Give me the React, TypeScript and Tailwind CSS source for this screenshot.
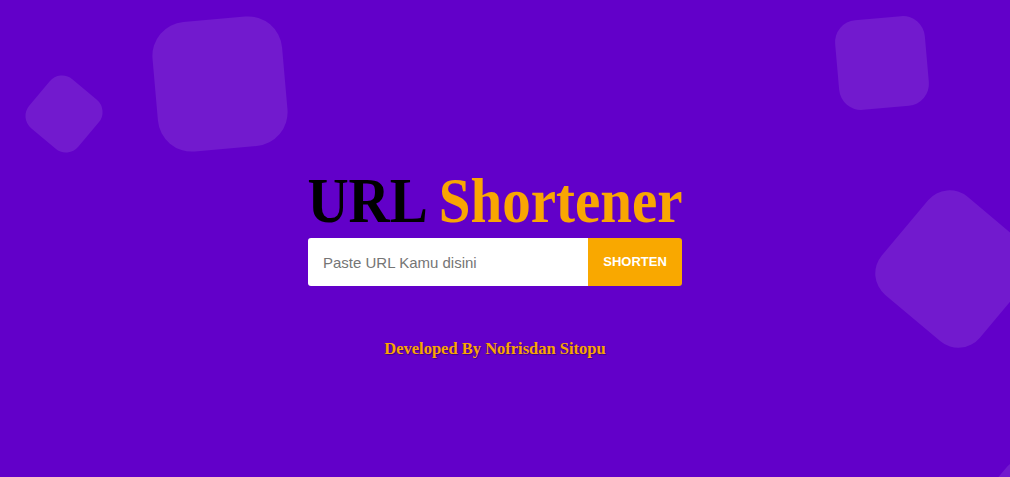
import React from 'react';

// decorative rounded squares floating in the background
const Shapes = () => (
  <div className="pointer-events-none absolute inset-0 overflow-hidden">
    <div className="absolute left-[32px] top-[82px] h-[64px] w-[64px] rotate-[40deg] rounded-[16px] bg-white/10" />
    <div className="absolute left-[155px] top-[19px] h-[130px] w-[130px] -rotate-[5deg] rounded-[34px] bg-white/10" />
    <div className="absolute left-[837px] top-[18px] h-[90px] w-[90px] -rotate-[5deg] rounded-[22px] bg-white/10" />
    <div className="absolute left-[890px] top-[205px] h-[128px] w-[128px] rotate-[40deg] rounded-[28px] bg-white/10" />
    <div className="absolute left-[990px] top-[468px] h-[60px] w-[60px] rotate-[40deg] rounded-[14px] bg-white/10" />
  </div>
);

export default function App() {
  return (
    <div className="relative h-[477px] w-full overflow-hidden bg-[#6200c9]">
      <Shapes />
      <div className="relative flex flex-col items-center pt-[170px] pr-[20px]">
        <h1 className="origin-bottom scale-y-[1.1] text-[57px] leading-[70px] font-bold font-['Liberation_Serif',serif] text-black">
          URL <span className="text-[#f9a602]">Shortener</span>
        </h1>
        <form className="-mt-[2px] flex h-[48px] w-[374px]" onSubmit={e => e.preventDefault()}>
          <input
            type="text"
            placeholder="Paste URL Kamu disini"
            className="h-full flex-1 rounded-l-[3px] bg-white px-[15px] text-[15px] text-gray-800 outline-none placeholder:text-[#757575] font-['Liberation_Sans',sans-serif]"
          />
          <button
            type="submit"
            className="h-full w-[94px] rounded-r-[3px] bg-[#f9a800] text-[13px] font-bold text-white font-['Liberation_Sans',sans-serif]"
          >
            SHORTEN
          </button>
        </form>
        <p className="mt-[51px] text-[16.5px] font-bold text-[#f9a602] font-['Liberation_Serif',serif] [text-shadow:1px_1px_1px_rgba(0,0,0,0.35)]">
          Developed By Nofrisdan Sitopu
        </p>
      </div>
    </div>
  );
}
